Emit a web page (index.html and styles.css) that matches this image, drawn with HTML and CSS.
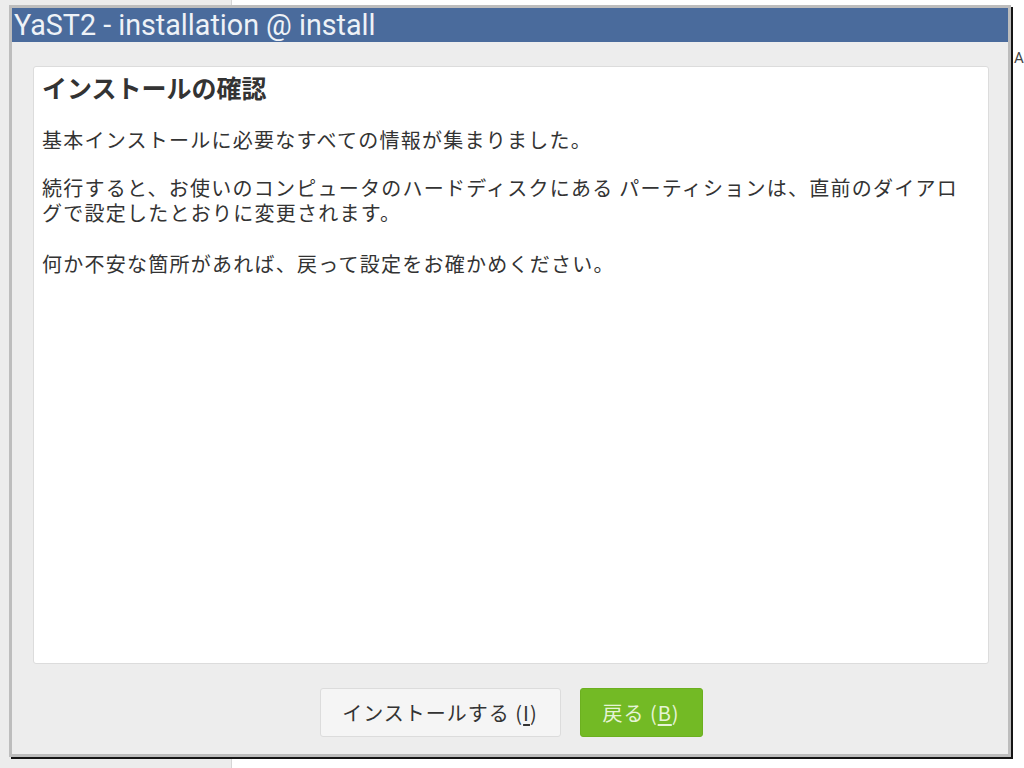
FILE: index.html
```html
<!DOCTYPE html>
<html lang="ja">
<head>
<meta charset="utf-8">
<title>YaST2 - installation @ install</title>
<link rel="stylesheet" href="styles.css">
</head>
<body>
<div class="desktop">
  <div class="sidebar"></div>
  <div class="main-bg"><span class="bg-glyph">A</span></div>

  <div class="window">
    <div class="titlebar">YaST2 - installation @ install</div>
    <div class="content">
      <div class="card">
        <h1 class="heading">インストールの確認</h1>
        <p class="para para-first">基本インストールに必要なすべての情報が集まりました。</p>
        <p class="para para-mid">続行すると、お使いのコンピュータのハードディスクにある パーティションは、直前のダイアログで設定したとおりに変更されます。</p>
        <p class="para para-last">何か不安な箇所があれば、戻って設定をお確かめください。</p>
      </div>
      <div class="buttons">
        <button class="btn btn-plain">インストールする (<u>I</u>)</button>
        <button class="btn btn-green">戻る (<u>B</u>)</button>
      </div>
    </div>
  </div>
</div>
</body>
</html>
```

FILE: styles.css
```css
html, body {
  margin: 0;
  padding: 0;
  width: 1024px;
  height: 768px;
  overflow: hidden;
  background: #ffffff;
  font-family: "Noto Sans CJK JP", "Noto Sans", sans-serif;
}

.desktop {
  position: relative;
  width: 1024px;
  height: 768px;
  display: flex;
}

.sidebar {
  width: 231px;
  height: 100%;
  background: #ececec;
  border-right: 1px solid #d6d6d6;
}

.main-bg {
  flex: 1;
  position: relative;
  background: #ffffff;
}

.bg-glyph {
  position: absolute;
  left: 782px;
  top: 49px;
  font-family: "Roboto", sans-serif;
  font-size: 15px;
  line-height: 18px;
  color: #444;
}

.window {
  position: absolute;
  left: 9px;
  top: 5px;
  width: 1002px;
  height: 752px;
  box-sizing: border-box;
  border: 3px solid #bdbdbd;
  box-shadow: 2px 2px 0 #151515;
  background: #ededed;
  display: flex;
  flex-direction: column;
}

.titlebar {
  height: 34px;
  line-height: 34px;
  background: #4a6b9c;
  color: #eef2f7;
  font-family: "Roboto", sans-serif;
  font-size: 28.7px;
  padding-left: 2px;
  white-space: nowrap;
  overflow: hidden;
}

.content {
  flex: 1;
  display: flex;
  flex-direction: column;
  padding: 24px 19px 17px 21px;
  min-height: 0;
}

.card {
  flex: 1;
  background: #ffffff;
  border: 1px solid #dcdcdc;
  border-radius: 3px;
  padding: 4px 16px 4px 8px;
  color: #2b2b2b;
}

.heading {
  margin: 0;
  font-size: 25px;
  line-height: 32px;
  font-weight: bold;
  color: #333;
}

.para {
  margin: 0;
  font-size: 20px;
  letter-spacing: 1.25px;
  line-height: 25px;
  color: #333;
}

.para-first {
  margin-top: 24px;
}

.para-mid {
  margin-top: 23px;
}

.para-last {
  margin-top: 26px;
}

.buttons {
  display: flex;
  justify-content: center;
  gap: 19px;
  margin-top: 24px;
}

.btn {
  height: 49px;
  box-sizing: border-box;
  border-radius: 3px;
  font-family: "Noto Sans CJK JP", "Noto Sans", sans-serif;
  font-size: 20px;
  letter-spacing: 1px;
  padding: 0;
  cursor: default;
}

.btn u {
  text-underline-offset: 3px;
}

.btn-plain {
  width: 241px;
  background: #f5f5f5;
  border: 1px solid #dcdcdc;
  color: #333;
}

.btn-green {
  width: 123px;
  background: #73ba25;
  border: 1px solid #6cb020;
  color: #e6f4d6;
}
```
